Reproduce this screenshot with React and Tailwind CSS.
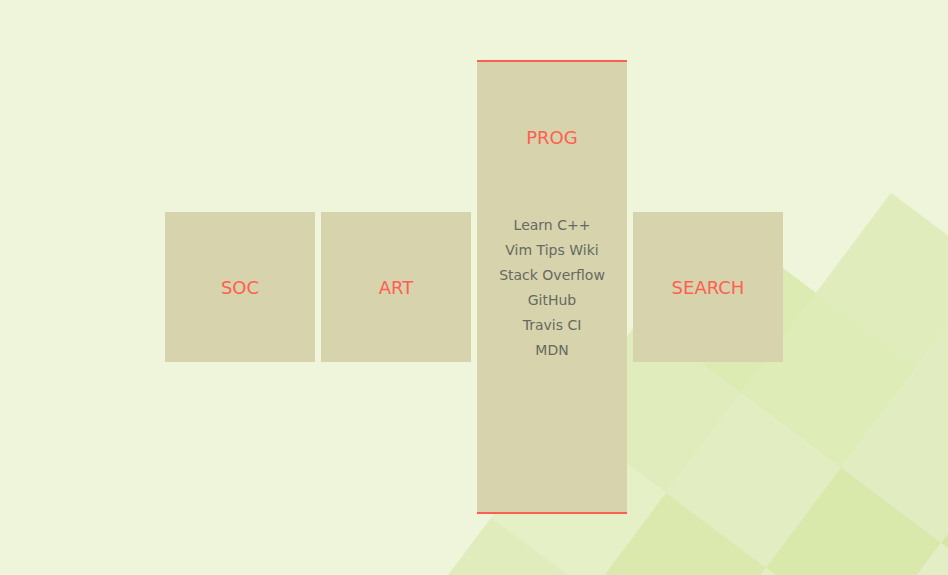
const groups = [
  { title: "SOC", links: [] },
  { title: "ART", links: [] },
  {
    title: "PROG",
    links: [
      { label: "Learn C++", href: "#learn-cpp" },
      { label: "Vim Tips Wiki", href: "#vim-tips" },
      { label: "Stack Overflow", href: "#stack-overflow" },
      { label: "GitHub", href: "#github" },
      { label: "Travis CI", href: "#travis-ci" },
      { label: "MDN", href: "#mdn" },
    ],
  },
  { title: "SEARCH", links: [] },
];

// Tilted tiles, each given by its top corner and its fill.
const tiles = [
  { x: 891, y: 193, fill: "#e0ecbb" },
  { x: 716, y: 218, fill: "#dbebb1" },
  { x: 991, y: 268, fill: "#e1edc1" },
  { x: 816, y: 293, fill: "#deecb7" },
  { x: 641, y: 318, fill: "#e0ecbb" },
  { x: 916, y: 368, fill: "#e1edc0" },
  { x: 741, y: 393, fill: "#e2eec1" },
  { x: 566, y: 418, fill: "#e5f0c7" },
  { x: 1016, y: 443, fill: "#d6e7a5" },
  { x: 841, y: 468, fill: "#d9e8ab" },
  { x: 666, y: 493, fill: "#dbe9ae" },
  { x: 491, y: 518, fill: "#e0ecbb" },
  { x: 941, y: 543, fill: "#e3eec4" },
  { x: 766, y: 568, fill: "#e3eec3" },
];

function Backdrop() {
  return (
    <svg
      className="absolute right-0 bottom-0"
      width="548"
      height="415"
      viewBox="400 160 548 415"
      aria-hidden="true"
    >
      {tiles.map(({ x, y, fill }) => (
        <path
          key={`${x}-${y}`}
          d={`M${x} ${y}l100 75l-75 100l-100 -75z`}
          fill={fill}
          stroke={fill}
          strokeWidth="0.3"
        />
      ))}
    </svg>
  );
}

function Card({ title, links }) {
  const open = links.length > 0;
  return (
    <section
      className={
        open
          ? "w-[150px] border-y-2 border-[#ff5f52] bg-[#d6d3ad] pt-px pb-[149px] text-center"
          : "h-[150px] w-[150px] bg-[#d6d3ad] pt-px text-center"
      }
    >
      <h2 className="text-lg leading-[150px] text-[#ff5f52]">{title}</h2>
      {open && (
        <ul className="text-sm leading-[25px] text-[#666a62]">
          {links.map(({ label, href }) => (
            <li key={label}>
              <a href={href}>{label}</a>
            </li>
          ))}
        </ul>
      )}
    </section>
  );
}

export default function App() {
  return (
    <div className="relative flex min-h-screen items-center justify-center overflow-hidden bg-[#eff5db] pb-px font-['DejaVu_Sans',sans-serif]">
      <Backdrop />
      <main className="relative flex items-center gap-1.5">
        {groups.map((group) => (
          <Card key={group.title} {...group} />
        ))}
      </main>
    </div>
  );
}
